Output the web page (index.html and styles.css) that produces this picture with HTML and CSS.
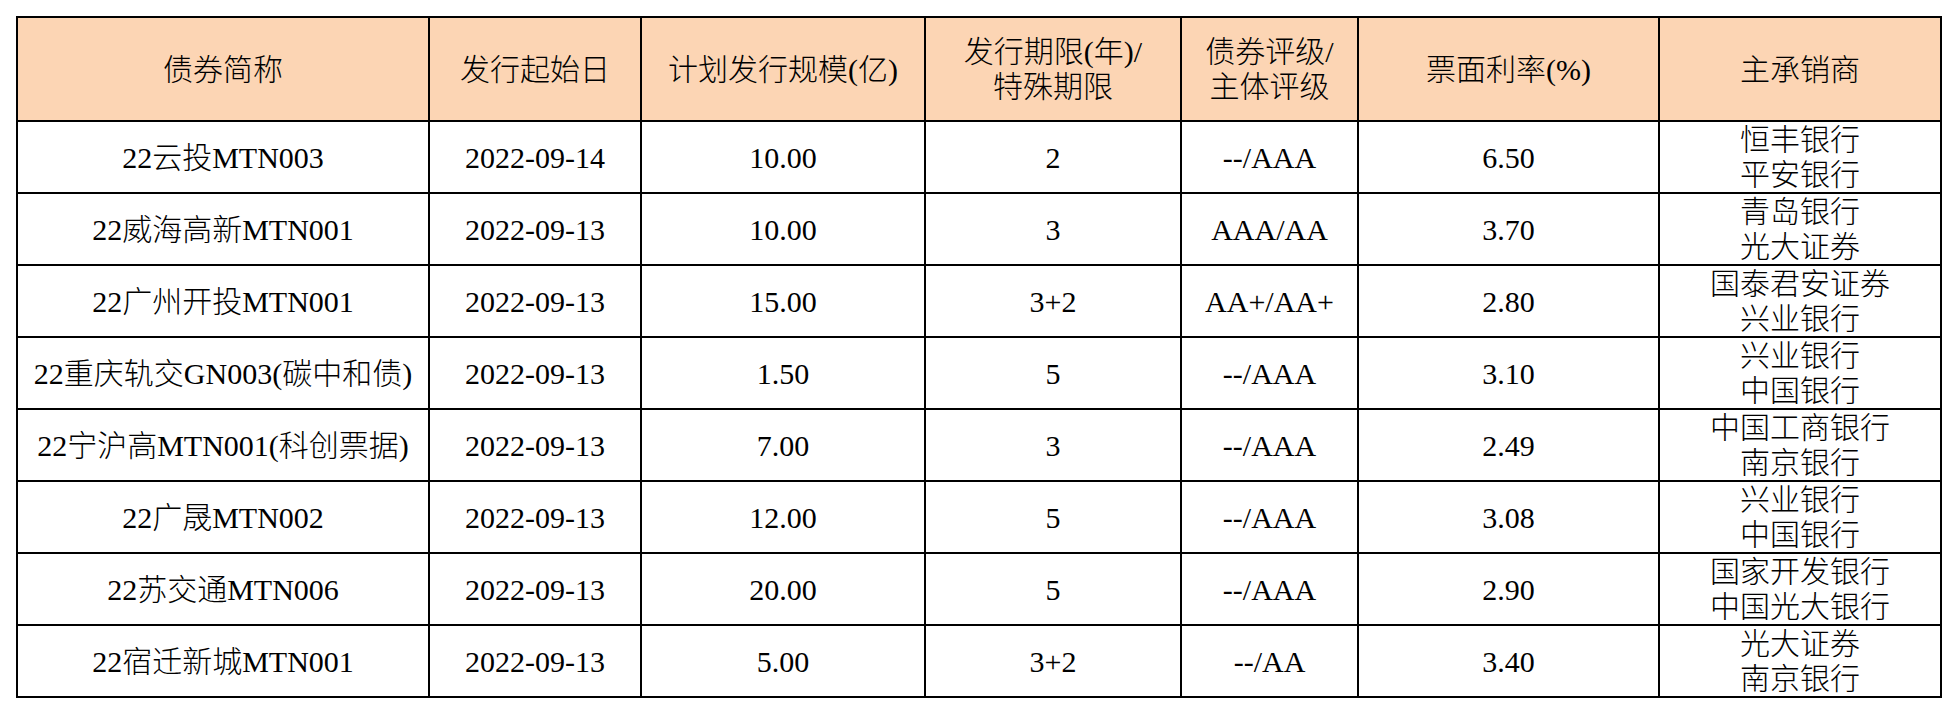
FILE: index.html
```html
<!DOCTYPE html>
<html lang="zh-CN">
<head>
<meta charset="utf-8">
<title>债券发行</title>
<link rel="stylesheet" href="styles.css">
</head>
<body>
<div class="page">
<table class="bonds">
  <colgroup>
    <col class="c-name"><col class="c-date"><col class="c-size"><col class="c-term"><col class="c-rate"><col class="c-coupon"><col class="c-under">
  </colgroup>
  <thead>
    <tr>
      <th>债券简称</th><th>发行起始日</th><th>计划发行规模(亿)</th><th>发行期限(年)/<br>特殊期限</th><th>债券评级/<br>主体评级</th><th>票面利率(%)</th><th>主承销商</th>
    </tr>
  </thead>
  <tbody>
    <tr><td>22云投MTN003</td><td>2022-09-14</td><td>10.00</td><td>2</td><td>--/AAA</td><td>6.50</td><td>恒丰银行<br>平安银行</td></tr>
    <tr><td>22威海高新MTN001</td><td>2022-09-13</td><td>10.00</td><td>3</td><td>AAA/AA</td><td>3.70</td><td>青岛银行<br>光大证券</td></tr>
    <tr><td>22广州开投MTN001</td><td>2022-09-13</td><td>15.00</td><td>3+2</td><td>AA+/AA+</td><td>2.80</td><td>国泰君安证券<br>兴业银行</td></tr>
    <tr><td>22重庆轨交GN003(碳中和债)</td><td>2022-09-13</td><td>1.50</td><td>5</td><td>--/AAA</td><td>3.10</td><td>兴业银行<br>中国银行</td></tr>
    <tr><td>22宁沪高MTN001(科创票据)</td><td>2022-09-13</td><td>7.00</td><td>3</td><td>--/AAA</td><td>2.49</td><td>中国工商银行<br>南京银行</td></tr>
    <tr><td>22广晟MTN002</td><td>2022-09-13</td><td>12.00</td><td>5</td><td>--/AAA</td><td>3.08</td><td>兴业银行<br>中国银行</td></tr>
    <tr><td>22苏交通MTN006</td><td>2022-09-13</td><td>20.00</td><td>5</td><td>--/AAA</td><td>2.90</td><td>国家开发银行<br>中国光大银行</td></tr>
    <tr><td>22宿迁新城MTN001</td><td>2022-09-13</td><td>5.00</td><td>3+2</td><td>--/AA</td><td>3.40</td><td>光大证券<br>南京银行</td></tr>
  </tbody>
</table>
</div>
</body>
</html>
```

FILE: styles.css
```css
html, body {
  margin: 0;
  padding: 0;
  background: #ffffff;
}

.page {
  padding: 16px 0 0 16px;
}

.bonds {
  border-collapse: collapse;
  table-layout: fixed;
  width: 1924px;
  font-family: "Liberation Serif", "Noto Sans CJK SC", serif;
  font-size: 30px;
  font-weight: 300;
  line-height: 35px;
  color: #000000;
}

.c-name { width: 412px; }
.c-date { width: 212px; }
.c-size { width: 284px; }
.c-term { width: 256px; }
.c-rate { width: 177px; }
.c-coupon { width: 301px; }
.c-under { width: 282px; }

.bonds th,
.bonds td {
  border: 2px solid #000000;
  padding: 0;
  text-align: center;
  vertical-align: middle;
  white-space: nowrap;
  overflow: hidden;
}

.bonds th {
  background: #fcd5b4;
  font-weight: 300;
}

.bonds thead tr {
  height: 104px;
}

.bonds tbody tr {
  height: 70px;
}
```
